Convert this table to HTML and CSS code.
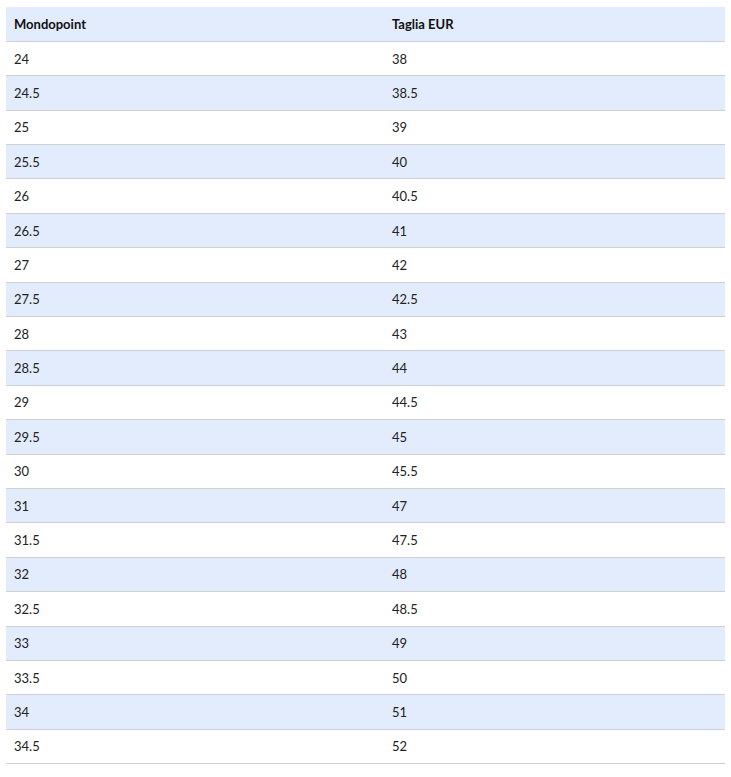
FILE: index.html
```html
<!DOCTYPE html>
<html lang="it">
<head>
<meta charset="utf-8">
<link rel="stylesheet" href="styles.css">
</head>
<body>
<table class="size-table">
<thead>
<tr><th class="col-a">Mondopoint</th><th>Taglia EUR</th></tr>
</thead>
<tbody>
<tr><td>24</td><td>38</td></tr>
<tr><td>24.5</td><td>38.5</td></tr>
<tr><td>25</td><td>39</td></tr>
<tr><td>25.5</td><td>40</td></tr>
<tr><td>26</td><td>40.5</td></tr>
<tr><td>26.5</td><td>41</td></tr>
<tr><td>27</td><td>42</td></tr>
<tr><td>27.5</td><td>42.5</td></tr>
<tr><td>28</td><td>43</td></tr>
<tr><td>28.5</td><td>44</td></tr>
<tr><td>29</td><td>44.5</td></tr>
<tr><td>29.5</td><td>45</td></tr>
<tr><td>30</td><td>45.5</td></tr>
<tr><td>31</td><td>47</td></tr>
<tr><td>31.5</td><td>47.5</td></tr>
<tr><td>32</td><td>48</td></tr>
<tr><td>32.5</td><td>48.5</td></tr>
<tr><td>33</td><td>49</td></tr>
<tr><td>33.5</td><td>50</td></tr>
<tr><td>34</td><td>51</td></tr>
<tr><td>34.5</td><td>52</td></tr>
</tbody>
</table>
</body>
</html>
```

FILE: styles.css
```css
html, body {
  margin: 0;
  background: #ffffff;
}
body {
  padding: 7px 6px;
  font-family: "Lato", "Open Sans", sans-serif;
  color: #222222;
}
.size-table {
  width: 719px;
  border-collapse: collapse;
  table-layout: fixed;
  font-size: 13px;
}
.size-table th,
.size-table td {
  text-align: left;
  padding: 0 8px;
  height: 34.4px;
  box-sizing: border-box;
  vertical-align: middle;
}
.size-table th {
  font-weight: 700;
  color: #111111;
}
.size-table .col-a {
  width: 378px;
}
.size-table thead tr {
  background: #e2ecfd;
  border-bottom: 1px solid #d0d0d0;
}
.size-table tbody tr {
  border-bottom: 1px solid #d0d0d0;
}
.size-table tbody tr:nth-child(even) {
  background: #e2ecfd;
}
```
